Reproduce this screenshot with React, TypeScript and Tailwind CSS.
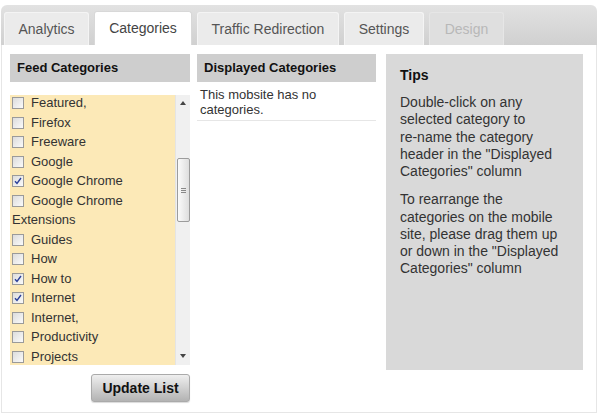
const tabs = [
  { label: 'Analytics', w: 'w-[85px]' },
  { label: 'Categories', w: 'w-[98px]', active: true },
  { label: 'Traffic Redirection', w: 'w-[142px]' },
  { label: 'Settings', w: 'w-[80px]' },
  { label: 'Design', w: 'w-[75px]', disabled: true },
];

const feedItems = [
  { label: 'Featured,', checked: false },
  { label: 'Firefox', checked: false },
  { label: 'Freeware', checked: false },
  { label: 'Google', checked: false },
  { label: 'Google Chrome', checked: true },
  { label: 'Google Chrome Extensions', checked: false },
  { label: 'Guides', checked: false },
  { label: 'How', checked: false },
  { label: 'How to', checked: true },
  { label: 'Internet', checked: true },
  { label: 'Internet,', checked: false },
  { label: 'Productivity', checked: false },
  { label: 'Projects', checked: false },
];

export default function App() {
  return (
    <div className="h-[418px] w-[600px] overflow-hidden bg-white font-['Liberation_Sans',Arial,sans-serif]">
      <div className="ml-[1px] w-[596px] pt-[5px]">
        {/* tab strip */}
        <div className="flex h-[40px] items-end gap-[5px] rounded-t-[6px] bg-gradient-to-b from-[#e2e2e2] to-[#d0d0d0] pl-[3px]">
          {tabs.map((tab) => (
            <div
              key={tab.label}
              className={`flex h-[33px] items-center justify-center rounded-t-[3px] border border-b-0 text-[14px] ${tab.w} ${
                tab.active
                  ? 'h-[34px] border-[#d8d8d8] bg-white text-[#444]'
                  : tab.disabled
                    ? 'border-[#e6e6e6] bg-[#dfdfdf] text-[#b8b8b8]'
                    : 'border-[#f4f4f4] bg-[#ebebeb] text-[#555]'
              }`}
            >
              {tab.label}
            </div>
          ))}
        </div>

        {/* panel */}
        <div className="flex h-[368px] gap-[7px] border-x border-b border-[#e6e6e6] pl-[8px] pt-[9px]">
          <FeedColumn />

          <div className="w-[179px]">
            <div className="flex h-[28px] items-center bg-[#cecece] pl-[7px] text-[13px] font-bold text-[#111]">
              Displayed Categories
            </div>
            <div className="border-b border-[#e6e6e6] px-[3px] pb-[3px] pt-[5px] text-[13px] leading-[15px] text-[#333]">
              This mobsite has no categories.
            </div>
          </div>

          <div className="ml-[3px] h-[316px] w-[197px] bg-[#d9d9d9] pl-[14px] pr-[12px] pt-[13px] text-[#333]">
            <div className="text-[14px] font-bold leading-[17px] text-[#111]">Tips</div>
            <p className="mt-[10px] text-[14px] leading-[17.25px]">
              Double-click on any selected category to <span className="whitespace-nowrap">re-name</span> the category
              header in the "Displayed Categories" column
            </p>
            <p className="mt-[11px] text-[14px] leading-[17.25px]">
              To rearrange the categories on the mobile site, please drag them up or down in the "Displayed Categories" column
            </p>
          </div>
        </div>
      </div>
    </div>
  );
}

function FeedColumn() {
  return (
    <div className="flex w-[180px] flex-col">
      <div className="flex h-[28px] items-center bg-[#cecece] pl-[7px] text-[13px] font-bold text-[#111]">
        Feed Categories
      </div>
      <div className="mt-[13px] flex h-[270px]">
        <div className="w-[165px] overflow-hidden bg-[#fce9b7]">
          <div className="-mt-[2px]">
            {feedItems.map((item) => (
              <div key={item.label} className="pl-[2px] text-[13px] leading-[19.5px] text-[#333]">
                <Checkbox checked={item.checked} />
                {item.label}
              </div>
            ))}
          </div>
        </div>
        <Scrollbar />
      </div>
      <div className="mt-[9px] flex justify-end">
        <button className="h-[28px] w-[99px] rounded-[3px] border border-[#aaa] bg-gradient-to-b from-[#efefef] to-[#b3b3b3] text-[14px] font-bold text-[#111] shadow-[0_1px_1px_rgba(0,0,0,0.15)]">
          Update List
        </button>
      </div>
    </div>
  );
}

function Checkbox({ checked }: { checked: boolean }) {
  return (
    <span className="relative mr-[7px] inline-block h-[12px] w-[12px] translate-y-[1px] border border-[#9a9a9a] bg-gradient-to-br from-[#dcdcdc] to-[#fafafa] align-[-1px]">
      {checked && (
        <svg className="absolute left-[1px] top-[1px] h-[8px] w-[8px]" viewBox="0 0 8 8" fill="none">
          <path d="M1 4.2 L3 6.5 L7 1" stroke="#2a3f9a" strokeWidth={1.4} />
        </svg>
      )}
    </span>
  );
}

function Scrollbar() {
  return (
    <div className="relative w-[15px] border-l border-[#e4e4e4] bg-[#f0f0f0]">
      <svg className="absolute left-[4px] top-[6px] h-[4px] w-[6px]" viewBox="0 0 6 4">
        <path d="M0 4 L3 0 L6 4 Z" fill="#444" />
      </svg>
      <div className="absolute left-[1px] top-[63px] flex h-[64px] w-[13px] items-center justify-center rounded-[2px] border border-[#9c9c9c] bg-gradient-to-r from-[#fbfbfb] to-[#dedede]">
        <div className="flex flex-col gap-[1px]">
          <div className="h-px w-[5px] bg-[#888]" />
          <div className="h-px w-[5px] bg-[#888]" />
          <div className="h-px w-[5px] bg-[#888]" />
        </div>
      </div>
      <svg className="absolute bottom-[7px] left-[4px] h-[4px] w-[6px]" viewBox="0 0 6 4">
        <path d="M0 0 L3 4 L6 0 Z" fill="#444" />
      </svg>
    </div>
  );
}
